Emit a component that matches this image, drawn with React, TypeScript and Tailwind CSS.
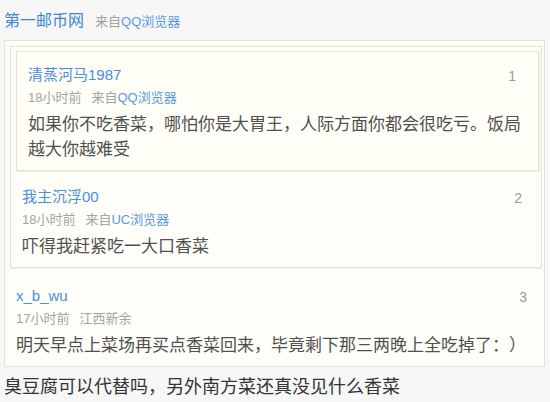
const font = "font-['Liberation_Sans','Noto_Sans_CJK_SC',sans-serif] [text-spacing-trim:space-all]";

type Floor = {
  name: string;
  time: string;
  from?: string;
  place?: string;
  text: string;
  num: number;
};

function Meta({ f }: { f: Floor }) {
  return (
    <div className="text-[13px] leading-[23px] text-[#a3a3a3]">
      <span>{f.time}</span>
      <span className="ml-[10px]">
        {f.from ? (
          <>
            来自<span className="text-[#5a9ae3]">{f.from}</span>
          </>
        ) : (
          f.place
        )}
      </span>
    </div>
  );
}

function Body({ f, pad, numRight }: { f: Floor; pad: string; numRight: string }) {
  return (
    <div className={`pb-[8px] ${pad}`}>
      <div className="flex h-[23px] items-center justify-between">
        <span className="text-[15px] leading-[23px] text-[#4a8fdc]">{f.name}</span>
        <span className={`translate-y-[2px] text-[14px] leading-[23px] text-[#999] ${numRight}`}>{f.num}</span>
      </div>
      <Meta f={f} />
      <p className="mt-[3px] text-[17px] leading-[25px] text-[#505050]">{f.text}</p>
    </div>
  );
}

const floors: Floor[] = [
  {
    name: "清蒸河马1987",
    time: "18小时前",
    from: "QQ浏览器",
    text: "如果你不吃香菜，哪怕你是大胃王，人际方面你都会很吃亏。饭局越大你越难受",
    num: 1,
  },
  {
    name: "我主沉浮00",
    time: "18小时前",
    from: "UC浏览器",
    text: "吓得我赶紧吃一大口香菜",
    num: 2,
  },
  {
    name: "x_b_wu",
    time: "17小时前",
    place: "江西新余",
    text: "明天早点上菜场再买点香菜回来，毕竟剩下那三两晚上全吃掉了：）",
    num: 3,
  },
];

export default function App() {
  return (
    <div className={`min-h-[402px] w-[550px] bg-[#f7f7f7] pt-[9px] pl-[4px] pr-[5px] ${font}`}>
      <div className="flex items-baseline leading-[24px]">
        <span className="text-[16px] text-[#3b86d6]">第一邮币网</span>
        <span className="ml-[11px] text-[13px] text-[#a3a3a3]">
          来自<span className="text-[#5a9ae3]">QQ浏览器</span>
        </span>
      </div>

      {/* outer floor */}
      <div className="mt-[6px] border border-[#e4e3d8] bg-[#fffef8] pl-[5px] pr-[2px] pt-[5px]">
        {/* floor 2 */}
        <div className="mb-[4px] border border-[#e4e3d8] bg-[#fffef8] pl-[5px] pr-[2px] pt-[4px] shadow-[0_1px_0_#f0efe6]">
          {/* floor 1 */}
          <div className="mb-[3px] border border-[#e4e3d8] bg-[#fffef7] shadow-[1px_1px_0_#eeede4]">
            <Body f={floors[0]} pad="pt-[11px] px-[11px]" numRight="mr-[11px]" />
          </div>
          <Body f={floors[1]} pad="pt-[11px] pl-[6px] pr-[9px]" numRight="mr-[8px]" />
        </div>
        <Body f={floors[2]} pad="pt-[12px] pl-[6px] pr-[9px]" numRight="mr-[6px]" />
      </div>

      <p className="mt-[7px] text-[18px] leading-[26px] text-[#333]">
        臭豆腐可以代替吗，另外南方菜还真没见什么香菜
      </p>
    </div>
  );
}
